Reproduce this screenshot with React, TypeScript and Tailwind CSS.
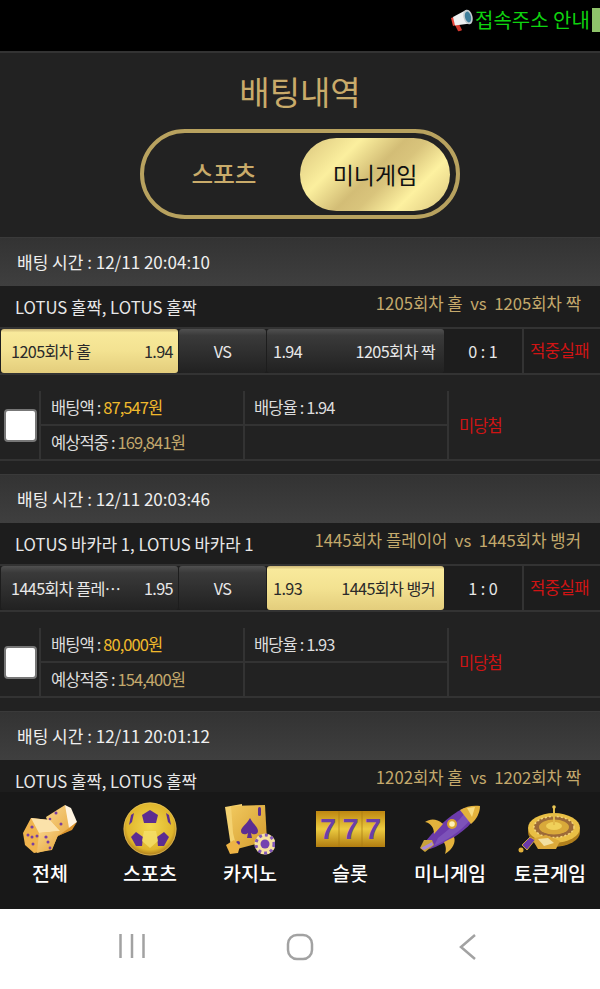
const font = { fontFamily: '"Noto Sans CJK KR", "Noto Sans", sans-serif' };

const bets = [
  {
    time: '12/11 20:04:10',
    game: 'LOTUS 홀짝, LOTUS 홀짝',
    match: '1205회차 홀  vs  1205회차 짝',
    left: '1205회차 홀',
    leftOdd: '1.94',
    right: '1205회차 짝',
    rightOdd: '1.94',
    picked: 'left',
    score: '0 : 1',
    amount: '87,547원',
    rate: '1.94',
    win: '169,841원',
  },
  {
    time: '12/11 20:03:46',
    game: 'LOTUS 바카라 1, LOTUS 바카라 1',
    match: '1445회차 플레이어  vs  1445회차 뱅커',
    left: '1445회차 플레…',
    leftOdd: '1.95',
    right: '1445회차 뱅커',
    rightOdd: '1.93',
    picked: 'right',
    score: '1 : 0',
    amount: '80,000원',
    rate: '1.93',
    win: '154,400원',
  },
];

const goldBtn = 'bg-[linear-gradient(180deg,#cdb777_0,#f8e99b_8%,#f3e291_50%,#e3cd7c_100%)] text-[#2a2a2a]';
const darkBtn = 'bg-[linear-gradient(180deg,#505050_0,#3a3a3a_15%,#212121_100%)] text-[#e8e8e8]';

const Megaphone = () => (
  <svg width="24" height="24" viewBox="0 0 24 24" className="shrink-0">
    <path d="M1 10 L4 9 L6 17 L3 18 Z" fill="#e8483c" />
    <path d="M5 17 L9 16 L12 22 C11 23 9 23.500 8 23 Z" fill="#d2382e" />
    <path d="M3 9 L16 2 L20 15.500 L5 17.500 Z" fill="#eef1f2" />
    <ellipse cx="18" cy="9" rx="4.500" ry="7.500" fill="#c4ccd0" transform="rotate(-14 18 9)" />
    <ellipse cx="18" cy="9" rx="3" ry="5.500" fill="#3f7f9c" transform="rotate(-14 18 9)" />
  </svg>
);

const Dice = () => (
  <svg width="56" height="50" viewBox="0 0 56 50">
    <defs>
      <linearGradient id="diceFace" x1="0" y1="0" x2="1" y2="1">
        <stop offset="0" stopColor="#f8d488" />
        <stop offset="1" stopColor="#e6a63e" />
      </linearGradient>
    </defs>
    <path d="M24 13 L43 1 L54 17 L50 25 L32 34 Z" fill="url(#diceFace)" />
    <path d="M43 1 L49 4 L55 18 L47 24 Z" fill="#fff4e0" />
    <path d="M47 24 L55 18 L50 26 L36 32 Z" fill="#d8922c" />
    <path d="M1 29 L9 14 L28 16 L38 26 L30 46 L12 49 L3 41 Z" fill="#f0b44e" />
    <path d="M9 14 L28 16 L38 27 L17 29 Z" fill="#fbe2aa" />
    <path d="M17 29 L38 27 L30 45 L15 49 Z" fill="url(#diceFace)" />
    <g fill="#7a3fa0">
      <circle cx="34" cy="9" r="1.500" /><circle cx="39" cy="20" r="1.500" /><circle cx="28" cy="15" r="1.300" />
      <circle cx="10" cy="23" r="1.600" /><circle cx="15" cy="32" r="1.500" /><circle cx="6" cy="31" r="1.500" />
      <circle cx="10" cy="33" r="1.500" /><circle cx="11" cy="40" r="1.500" />
      <circle cx="24" cy="33" r="1.600" /><circle cx="26" cy="38" r="1.500" /><circle cx="28" cy="44" r="1.400" />
    </g>
  </svg>
);

const Ball = () => (
  <svg width="54" height="54" viewBox="0 0 54 54">
    <defs>
      <radialGradient id="ballGold" cx="50%" cy="45%" r="55%">
        <stop offset="0" stopColor="#f2d84e" />
        <stop offset="0.8" stopColor="#e0b62c" />
        <stop offset="1" stopColor="#a9781c" />
      </radialGradient>
    </defs>
    <circle cx="27" cy="27" r="26.500" fill="url(#ballGold)" />
    <circle cx="27" cy="27" r="26" fill="none" stroke="#e6c86a" strokeWidth="1" opacity="0.600" />
    <g fill="#5c2d91">
      <path d="M27 8 L35 13 L33 21 L21 21 L19 13 Z" />
      <path d="M13 30 L20 35 L19 44 L13 44 L8 35 Z" />
      <path d="M41 30 L46 35 L41 44 L35 44 L34 35 Z" />
      <path d="M8 13 L11 11 L9 20 L6 23 Z" />
      <path d="M46 13 L43 11 L45 20 L48 23 Z" />
    </g>
    <path d="M21 29 L33 29 L35 39 L27 46 L19 39 Z" fill="#f5e06a" opacity="0.800" />
  </svg>
);

const Cards = () => (
  <svg width="50" height="52" viewBox="0 0 50 52">
    <defs>
      <linearGradient id="cardGold" x1="0" y1="0" x2="1" y2="1">
        <stop offset="0" stopColor="#f1c85e" />
        <stop offset="1" stopColor="#d29a2c" />
      </linearGradient>
    </defs>
    <path d="M0 4 L17 1 L17 40 L6 44 Z" fill="#f4d271" />
    <path d="M6 3 L40 2 L42 38 L12 46 L8 30 Z" fill="url(#cardGold)" />
    <path d="M25 15 C28 21 33 24 33 28 C33 32 28 32 26 30 L27 35 L22 35 L23 30 C21 32 16 32 16 28 C16 24 22 21 25 15 Z" fill="#5c2d91" />
    <rect x="33" y="4" width="3" height="9" rx="1.500" fill="#5c2d91" />
    <circle cx="13" cy="40" r="2" fill="#5c2d91" />
    <path d="M1 42 L9 37 L15 43 L13 50 L5 51 Z" fill="#eeb445" />
    <circle cx="40" cy="41" r="10.500" fill="#f7e2a0" />
    <circle cx="40" cy="41" r="9" fill="none" stroke="#8259b8" strokeWidth="3" strokeDasharray="3 3" />
    <circle cx="40" cy="41" r="4.500" fill="#7443b0" />
  </svg>
);

const Slots = () => (
  <svg width="69" height="36" viewBox="0 0 69 36">
    <defs>
      <linearGradient id="slotGold" x1="0" y1="0" x2="0" y2="1">
        <stop offset="0" stopColor="#bd8610" />
        <stop offset="0.5" stopColor="#eccb40" />
        <stop offset="1" stopColor="#b07c10" />
      </linearGradient>
    </defs>
    <rect x="0" y="0" width="69" height="36" fill="url(#slotGold)" />
    <path d="M23 0 V36 M46 0 V36" stroke="#a87a12" strokeWidth="1" opacity="0.700" />
    <g fontFamily='"Liberation Sans", sans-serif' fontSize="29" fontWeight="700" fill="#6a40a8" textAnchor="middle">
      <text x="12" y="28">7</text>
      <text x="34.500" y="28">7</text>
      <text x="57" y="28">7</text>
    </g>
  </svg>
);

const Rocket = () => (
  <svg width="60" height="50" viewBox="0 0 60 50">
    <path d="M4 40 C12 28 28 12 44 4 L52 18 C42 30 24 40 10 45 Z" fill="#6c3bab" />
    <path d="M18 34 C28 26 38 18 46 8 L50 16 C42 26 28 36 14 42 Z" fill="#8d6ac8" opacity="0.500" />
    <path d="M40 6 C46 2 54 1 60 2 C60 8 57 15 51 20 Z" fill="#e3b23c" />
    <path d="M47 4 L55 3 L52 13 Z" fill="#f6dc82" />
    <path d="M0 44 L4 36 L12 36 L14 41 L5 48 Z" fill="#c9a23a" />
    <path d="M1 44 L12 38 L13 41 L4 46 Z" fill="#a98ad8" />
    <path d="M23 20 C16 14 10 15 5 18 C11 19 14 24 14 30 Z" fill="#e3b23c" />
    <path d="M34 33 C36 38 33 45 25 50 C27 44 25 41 24 38 Z" fill="#e3b23c" />
    <circle cx="32" cy="20" r="5" fill="#d9a32e" />
    <circle cx="32" cy="20" r="2.800" fill="#fff0b8" />
  </svg>
);

const Roulette = () => (
  <svg width="64" height="48" viewBox="0 0 64 48">
    <ellipse cx="36" cy="27" rx="26" ry="15" fill="#b07f1c" />
    <ellipse cx="36" cy="23" rx="26" ry="15" fill="#e9bf45" />
    <ellipse cx="36" cy="22" rx="20" ry="10.500" fill="#9c6a38" />
    <ellipse cx="36" cy="22" rx="20" ry="10.500" fill="none" stroke="#f3d57a" strokeWidth="1.500" strokeDasharray="2 2" />
    <ellipse cx="36" cy="22" rx="15" ry="7.500" fill="#d9a93a" />
    <ellipse cx="36" cy="21" rx="8" ry="4" fill="#f0d05a" />
    <path d="M36 1 V20" stroke="#e3bb4a" strokeWidth="2" />
    <circle cx="36" cy="2" r="1.800" fill="#e9c655" />
    <path d="M14 34 L28 30 L42 36 L38 44 L20 44 Z" fill="#dca93a" />
    <path d="M20 34 L30 33 L36 38 L26 41 Z" fill="#f3e0a0" />
    <path d="M4 40 L12 32 L17 35 L9 45 Z" fill="#6b3aa8" stroke="#c9a23a" strokeWidth="1" />
    <circle cx="3" cy="45" r="2.500" fill="#e3b23c" />
  </svg>
);

const navItems = [
  { label: '전체', icon: <Dice /> },
  { label: '스포츠', icon: <Ball /> },
  { label: '카지노', icon: <Cards /> },
  { label: '슬롯', icon: <Slots /> },
  { label: '미니게임', icon: <Rocket /> },
  { label: '토큰게임', icon: <Roulette /> },
];

const HeaderRows = ({ time, game, match }: { time: string; game: string; match: string }) => (
  <>
    <div className="h-[49px] flex items-center pl-[17px] text-[17px] text-[#efefef] bg-[linear-gradient(180deg,#333333,#3f3f3f)] border-t border-[#3a3a3a]">
      배팅 시간 : {time}
    </div>
    <div className="h-[41px] pt-[2px] flex items-center justify-between pl-[15px] pr-[19px] bg-[#1d1d1d] text-[16.700px] text-[#e8e8e8]">
      <span>{game}</span>
      <span className="text-[#c4a96c] whitespace-pre -mt-[7px]">{match}</span>
    </div>
  </>
);

const BetCard = ({ bet }: { bet: (typeof bets)[number] }) => (
  <div className="mb-[13px]">
    <HeaderRows time={bet.time} game={bet.game} match={bet.match} />
    <div className="h-[48px] grid grid-cols-[178px_88px_178px_78px_78px] bg-[#1d1d1d] border-y-2 border-[#333333] text-[16.200px] tracking-[-0.6px]">
      <div className={`ml-[1px] rounded-[3px] flex items-center justify-between pl-[10px] pr-[5px] ${bet.picked === 'left' ? goldBtn : darkBtn}`}>
        <span>{bet.left}</span>
        <span>{bet.leftOdd}</span>
      </div>
      <div className={`rounded-[3px] ml-[1px] flex items-center justify-center ${darkBtn}`}>VS</div>
      <div className={`ml-[1px] rounded-[3px] flex items-center justify-between pl-[6px] pr-[9px] ${bet.picked === 'right' ? goldBtn : darkBtn}`}>
        <span>{bet.rightOdd}</span>
        <span>{bet.right}</span>
      </div>
      <div className="flex items-center justify-center text-[#e8e8e8] tracking-normal">{bet.score}</div>
      <div className="flex items-center pl-[6px] text-[16.700px] text-[#d01414] border-l-2 border-[#333333]">적중실패</div>
    </div>
    <div className="pt-[16px] bg-[#222222]">
      <div className="h-[70px] grid grid-cols-[41px_204px_204px_151px] grid-rows-[35px_33px] border-b-2 border-[#333333] text-[16.500px] tracking-[-0.9px] text-[#dddddd]">
        <div className="row-span-2 border-r-2 border-[#333333] flex items-center pl-[4px]">
          <div className="w-[33px] h-[33px] rounded-[4px] bg-white border-2 border-[#777777]" />
        </div>
        <div className="border-r-2 border-b-2 border-[#333333] flex items-center pl-[10px]">
          배팅액 :&nbsp;<span className="text-[#f0b92c]">{bet.amount}</span>
        </div>
        <div className="border-r-2 border-b-2 border-[#333333] flex items-center pl-[9px]">배당율 : {bet.rate}</div>
        <div className="row-span-2 flex items-center pl-[10px] text-[#d01414]">미당첨</div>
        <div className="border-r-2 border-[#333333] flex items-center pl-[10px]">
          예상적중 :&nbsp;<span className="text-[#c4a96c]">{bet.win}</span>
        </div>
        <div className="border-r-2 border-[#333333]" />
      </div>
    </div>
  </div>
);

export default function App() {
  return (
    <div className="w-[600px] h-[989px] flex flex-col overflow-hidden bg-[#222222]" style={font}>
      <div className="h-[51px] shrink-0 bg-black flex items-start pt-[8px] pl-[450px] overflow-hidden whitespace-nowrap">
        <Megaphone />
        <span className="ml-[1px] text-[20px] leading-[24px] text-[#0fd30f]">접속주소 안내</span>
        <span className="ml-[2px] w-[8px] h-[24px] shrink-0 bg-[#8fc36a]" />
      </div>

      <div className="flex-1 min-h-0 overflow-hidden border-t-2 border-[#333333]">
        <h1 className="pt-[13px] h-[76px] text-center text-[33px] leading-[50px] font-normal text-[#c9ab6a]">배팅내역</h1>
        <div className="w-[320px] h-[90px] mx-auto rounded-full border-4 border-[#b8a25f] flex items-center justify-between pl-[5px] pr-[6px]">
          <div className="w-[150px] text-center text-[23.500px] font-medium text-[#c9ab6a]">스포츠</div>
          <div className="w-[150px] h-[73px] rounded-full flex items-center justify-center text-[23px] text-[#111111] bg-[linear-gradient(135deg,#d9c47c_0%,#fbef9e_28%,#d3bd76_48%,#d9c47c_58%,#fdf1a0_75%,#d9c47c_100%)]">
            미니게임
          </div>
        </div>
        <div className="h-[18px]" />
        {bets.map((bet) => (
          <BetCard key={bet.time} bet={bet} />
        ))}
        <HeaderRows time="12/11 20:01:12" game="LOTUS 홀짝, LOTUS 홀짝" match="1202회차 홀  vs  1202회차 짝" />
      </div>

      <div className="h-[117px] shrink-0 bg-[#181818] grid grid-cols-6 pt-[10px]">
        {navItems.map((item) => (
          <div key={item.label} className="flex flex-col items-center">
            <div className="h-[54px] flex items-center justify-center">{item.icon}</div>
            <div className="mt-[3px] text-[19.500px] leading-[28px] font-medium text-white">{item.label}</div>
          </div>
        ))}
      </div>

      <div className="h-[80px] shrink-0 bg-white flex items-start pt-[24px]">
        <div className="w-[264px] flex justify-center">
          <svg width="26" height="26" viewBox="0 0 26 26">
            <path d="M1.500 1 V25 M13 1 V25 M24.500 1 V25" stroke="#a2a2a2" strokeWidth="2.500" />
          </svg>
        </div>
        <div className="w-[72px] flex justify-center">
          <svg width="28" height="28" viewBox="0 0 28 28">
            <rect x="2" y="2" width="24" height="24" rx="9" fill="none" stroke="#a2a2a2" strokeWidth="2.500" />
          </svg>
        </div>
        <div className="w-[264px] flex justify-center">
          <svg width="18" height="28" viewBox="0 0 18 28">
            <path d="M16 2 L2 14 L16 26" fill="none" stroke="#a2a2a2" strokeWidth="2.500" />
          </svg>
        </div>
      </div>
    </div>
  );
}
